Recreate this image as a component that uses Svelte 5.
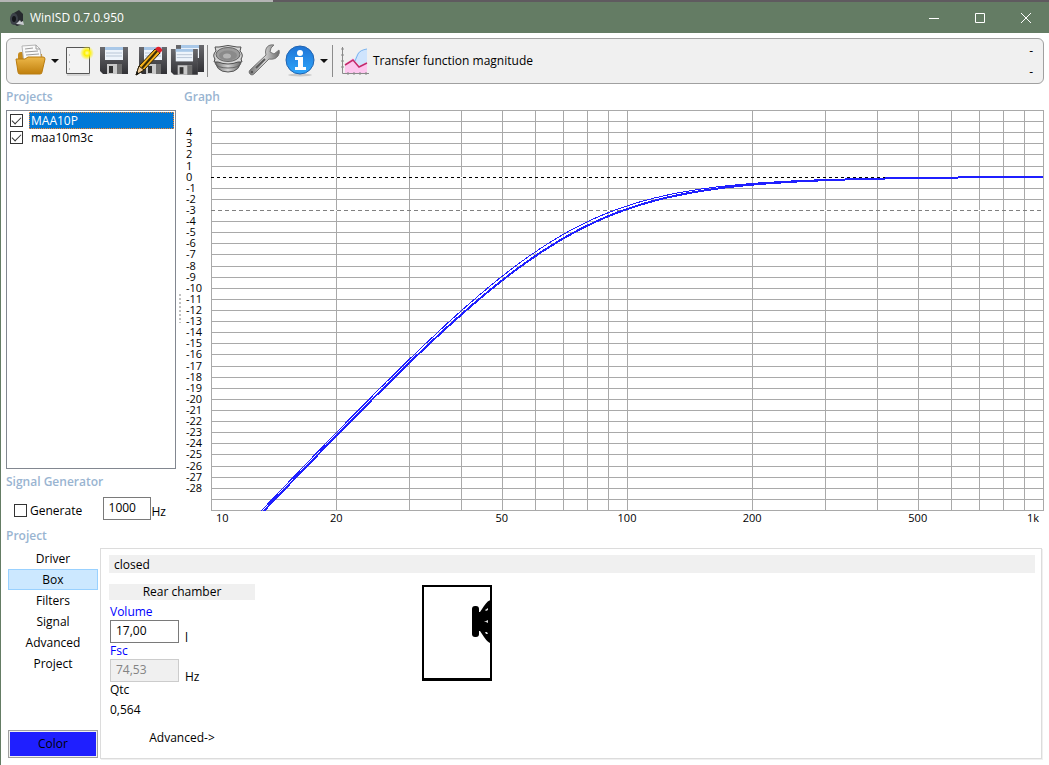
<script lang="ts">
  let projects = $state([
    { name: 'MAA10P', shown: true },
    { name: 'maa10m3c', shown: true },
  ]);
  let selected = $state(0);

  const tabs = ['Driver', 'Box', 'Filters', 'Signal', 'Advanced', 'Project'];
  let activeTab = $state('Box');

  let generate = $state(false);
  let signalHz = $state('1000');
  let volume = $state('17,00');
  let fsc = $state('74,53');

  // plot size follows the pane
  let graphW = $state(860);
  let graphH = $state(420);

  const LEFT = 27;
  const TOP = 4;
  const DB_MAX = 6;
  const DB_MIN = -30;

  let plotW = $derived(graphW - LEFT - 1);
  let plotH = $derived(graphH - TOP - 16);

  const freqX = (f: number) => LEFT + (Math.log10(f / 10) / 2) * plotW;
  const dbY = (db: number) => TOP + ((DB_MAX - db) / (DB_MAX - DB_MIN)) * plotH;
  const snap = (v: number) => Math.round(v) + 0.5;

  const freqs = [10, 20, 30, 40, 50, 60, 70, 80, 90, 100, 200, 300, 400, 500, 600, 700, 800, 900, 1000];
  const dbs = Array.from({ length: DB_MAX - DB_MIN + 1 }, (_, i) => DB_MAX - i);
  const labelDbs = dbs.filter((d) => d <= 4 && d >= -28);
  const freqLabels = [
    { f: 10, text: '10', anchor: 'start', dx: 5 },
    { f: 20, text: '20', anchor: 'middle', dx: 0 },
    { f: 50, text: '50', anchor: 'middle', dx: 0 },
    { f: 100, text: '100', anchor: 'middle', dx: 0 },
    { f: 200, text: '200', anchor: 'middle', dx: 0 },
    { f: 500, text: '500', anchor: 'middle', dx: 0 },
    { f: 1000, text: '1k', anchor: 'end', dx: -4 },
  ];

  // closed box: second order high-pass
  function response(f: number, fc: number, q: number) {
    const x = f / fc;
    const den = Math.sqrt((1 - x * x) ** 2 + (x / q) ** 2);
    return 20 * Math.log10((x * x) / den);
  }

  function curve(fc: number, q: number) {
    const pts: string[] = [];
    for (let i = 0; i <= 400; i++) {
      const f = 10 * 10 ** (i / 200);
      const db = response(f, fc, q);
      if (db < DB_MIN - 0.4) continue;
      pts.push(`${freqX(f).toFixed(1)},${dbY(db).toFixed(1)}`);
    }
    return pts.join(' ');
  }

  let thick = $derived(curve(75, 0.564));
  let thin = $derived(curve(74, 0.58));
</script>

{#snippet floppy()}
  <path d="M1 2h28v27H4l-3-3z" fill="url(#metal)" />
  <path d="M6 2h18v13H6z" fill="#eef4fb" />
  <path d="M6 2h18v3H6z" fill="#a9c8e8" />
  <path d="M7 8h16M7 11h16" stroke="#b9c6d6" />
  <path d="M8 19h15v10H8z" fill="#c9c9c9" />
  <path d="M10 21h4v7h-4z" fill="#333" />
  <path d="M18 19h5v10h-5z" fill="#6e6e6e" />
{/snippet}

<div class="window">
  <div class="desktop"></div>
  <header class="titlebar">
    <svg class="app-icon" viewBox="0 0 16 18" aria-hidden="true">
      <path d="M3 5 10 1l4 4v10l-6 2-5-3z" fill="#26292e" />
      <ellipse cx="5" cy="10" rx="4" ry="6" fill="#3c4149" />
      <ellipse cx="5" cy="10" rx="2" ry="3" fill="#14161a" />
      <path d="m7 15 4-4 1 2 2-1 1 4z" fill="#c9ccd0" />
    </svg>
    <h1>WinISD 0.7.0.950</h1>
    <div class="win-buttons">
      <button aria-label="Minimize"><svg viewBox="0 0 10 10"><path d="M0 5.5h10" /></svg></button>
      <button aria-label="Maximize"><svg viewBox="0 0 10 10"><path d="M.5.5h9v9h-9z" /></svg></button>
      <button aria-label="Close"><svg viewBox="0 0 10 10"><path d="m0 0 10 10M10 0 0 10" /></svg></button>
    </div>
  </header>

  <div class="toolbar">
    <svg class="defs" aria-hidden="true">
      <defs>
        <linearGradient id="metal" x2="0" y2="1">
          <stop offset="0" stop-color="#6a6a6e" /><stop offset="1" stop-color="#313135" />
        </linearGradient>
        <linearGradient id="folder" x2="0" y2="1">
          <stop offset="0" stop-color="#edb84a" /><stop offset="1" stop-color="#c07f0c" />
        </linearGradient>
        <linearGradient id="info" x2="0" y2="1">
          <stop offset="0" stop-color="#1f74d6" /><stop offset="1" stop-color="#2fa6fa" />
        </linearGradient>
        <linearGradient id="steel">
          <stop offset="0" stop-color="#707070" /><stop offset=".5" stop-color="#d4d4d4" /><stop offset="1" stop-color="#686868" />
        </linearGradient>
        <radialGradient id="glow">
          <stop offset="0" stop-color="#fffcb0" /><stop offset=".4" stop-color="#fff200" /><stop offset="1" stop-color="#fff200" stop-opacity="0" />
        </radialGradient>
      </defs>
    </svg>

    <button class="tool" aria-label="Open project">
      <svg viewBox="0 0 32 32">
        <path d="M3 10q0-3 3-3h5l2 2h14l1 15H3z" fill="#c68a1c" />
        <path d="m7 1 14-1 4 4 2 14-18 1z" fill="#fafafa" stroke="#b5b5b5" />
        <path d="M21 0v4h4M10 4l8-1M10 7l13-1M11 10l13-1" stroke="#9b9b9b" fill="none" />
        <path d="M1 14h9l3-2h15q2 0 2 2l-3 13q0 2-2 2H5q-2 0-2-2z" fill="url(#folder)" stroke="#b97c10" />
      </svg>
    </button>
    <button class="arrow" aria-label="Recent projects"></button>
    <button class="tool" aria-label="New project">
      <svg viewBox="0 0 32 32">
        <path d="M3.500 2.500h23v26h-23z" fill="#f3f3f3" stroke="#555" />
        <path d="M6 10h1M6 17h1M6 24h1" stroke="#888" />
        <path d="M4 30h23" stroke="#bbb" />
        <circle cx="24" cy="8" r="7" fill="url(#glow)" />
      </svg>
    </button>
    <button class="tool" aria-label="Save">
      <svg viewBox="0 0 32 32">{@render floppy()}</svg>
    </button>
    <button class="tool" aria-label="Save as">
      <svg viewBox="0 0 32 32">
        <g transform="translate(3 0)">{@render floppy()}</g>
        <path d="M1 30 4 21 20 4l5 4L9 25z" fill="#f6b21b" stroke="#2b2108" />
        <path d="M7 23 22 6" stroke="#3c2c04" stroke-width="2" />
        <path d="m20 4 2-2q2-1 4 1t1 3l-2 2z" fill="#e0202a" />
        <path d="m1 30 3-9 5 4z" fill="#edc998" stroke="#2b2108" />
        <path d="m1 30 1-4 2 3z" fill="#111" />
      </svg>
    </button>
    <button class="tool" aria-label="Save all">
      <svg viewBox="0 0 32 32">
        <g transform="translate(4 -2)">{@render floppy()}</g>
        <g transform="translate(-1 2) scale(.96)">{@render floppy()}</g>
      </svg>
    </button>
    <span class="sep"></span>
    <button class="tool" aria-label="Drivers">
      <svg viewBox="0 0 32 32">
        <path d="M3 13q0 14 13 14t13-14z" fill="url(#steel)" stroke="#555" />
        <path d="M3 18q2 5 13 5t13-5" stroke="#666" fill="none" />
        <path d="M3 2h4q9-3 18 0h4l-1 4q4 4 1 8l1 3h-4q-10 4-20 0H2l1-3q-3-4 1-8z" fill="#d6d6d6" stroke="#4f4f4f" />
        <ellipse cx="16" cy="9.500" rx="12" ry="7" fill="#9c9c9c" stroke="#666" />
        <ellipse cx="16" cy="10.500" rx="9" ry="5" fill="#8a8a8a" />
        <ellipse cx="15" cy="11" rx="4" ry="2.500" fill="#b4b4b4" />
      </svg>
    </button>
    <button class="tool" aria-label="Options">
      <svg viewBox="0 0 32 32">
        <path d="M26 0q-6-1-8 4-1 3 0 6L2 25q-2 2 0 4t4 0L21 14q6 1 9-3 2-3 1-6l-5 4-4-2 1-4z" fill="url(#steel)" stroke="#777" />
        <path d="m8 23 9-9" stroke="#5a5a5a" stroke-width="2" />
        <circle cx="4" cy="27" r="1" fill="#444" />
      </svg>
    </button>
    <button class="tool" aria-label="About">
      <svg viewBox="0 0 32 32">
        <ellipse cx="16" cy="30" rx="12" ry="1.500" fill="#c9c9c9" />
        <circle cx="16" cy="15" r="14" fill="url(#info)" stroke="#2063b0" />
        <circle cx="16" cy="8" r="3" fill="#fff" />
        <path d="M11 12h8v10h3v3H11v-3h3v-7h-3z" fill="#fff" />
      </svg>
    </button>
    <button class="arrow" aria-label="Help menu"></button>
    <span class="sep"></span>
    <button class="graph-type">
      <svg viewBox="0 0 28 28" aria-hidden="true">
        <path d="m4 17 8-6 6 8 8-4v11H4z" fill="#fdc6ee" />
        <path d="m13 13 3-6q2-4 10-5v13l-7 4z" fill="#cfe4fd" />
        <path d="m14 14 3-7q2-4 9-5" stroke="#7cb4ee" fill="none" />
        <path d="m4 18 8-5 6 7 8-4" stroke="#c42a6c" stroke-width="1.500" fill="none" />
        <path d="M1.500 0v26.500H28M0 2h3M0 8h3M0 14h3M0 20h3M7 25v3M13 25v3M19 25v3M25 25v3" stroke="#8a8a8a" fill="none" />
      </svg>
      Transfer function magnitude
    </button>
    <div class="readout"><span>-</span><span>-</span></div>
  </div>

  <div class="upper">
    <aside class="side">
      <h2>Projects</h2>
      <ul class="project-list">
        {#each projects as p, i}
          <li>
            <input type="checkbox" bind:checked={p.shown} aria-label={`Show ${p.name}`} />
            <button class:selected={i === selected} onclick={() => (selected = i)}>{p.name}</button>
          </li>
        {/each}
      </ul>
      <h2>Signal Generator</h2>
      <div class="generator">
        <label class="gen-check"><input type="checkbox" bind:checked={generate} />Generate</label>
        <label class="gen-freq"><input type="text" aria-label="Frequency" bind:value={signalHz} /><span>Hz</span></label>
      </div>
    </aside>

    <div class="splitter"></div>

    <section class="graph-pane">
      <h2>Graph</h2>
      <div class="graph" bind:clientWidth={graphW} bind:clientHeight={graphH}>
        <svg width={graphW} height={graphH}>
          <clipPath id="plot"><rect x={LEFT} y={TOP} width={plotW + 1} height={plotH + 1} /></clipPath>
          {#each freqs as f}
            <path class="grid" d="M{snap(freqX(f))} {TOP}V{TOP + plotH + 1}" />
          {/each}
          {#each dbs as db}
            {#if db === 0 || db === -3}
              <path class="grid blank" d="M{LEFT + 1} {snap(dbY(db))}H{LEFT + plotW}" />
            {/if}
            <path class="grid" class:zero={db === 0} class:cutoff={db === -3} d="M{LEFT} {snap(dbY(db))}H{LEFT + plotW + 1}" />
          {/each}
          <g clip-path="url(#plot)">
            <polyline class="curve" points={thin} />
            <polyline class="curve main" points={thick} />
          </g>
          {#each labelDbs as db}
            <text x="2" y={Math.round(dbY(db)) + 4}>{db}</text>
          {/each}
          {#each freqLabels as l}
            <text x={freqX(l.f) + l.dx} y={TOP + plotH + 12} text-anchor={l.anchor}>{l.text}</text>
          {/each}
        </svg>
      </div>
    </section>
  </div>

  <h2 class="project-title">Project</h2>
  <div class="lower">
    <nav class="tabs">
      {#each tabs as tab}
        <button class:active={tab === activeTab} onclick={() => (activeTab = tab)}>{tab}</button>
      {/each}
      <button class="color">Color</button>
    </nav>
    <section class="box-panel">
      <div class="box-type">closed</div>
      <div class="box-body">
        <div class="chamber">
          <h3>Rear chamber</h3>
          <label class="blue" for="volume">Volume</label>
          <div class="field"><input id="volume" type="text" bind:value={volume} /><span>l</span></div>
          <label class="blue" for="fsc">Fsc</label>
          <div class="field"><input id="fsc" type="text" bind:value={fsc} disabled /><span>Hz</span></div>
          <span class="label">Qtc</span>
          <span class="qtc">0,564</span>
          <button class="advanced">Advanced-&gt;</button>
        </div>
        <svg class="box-drawing" viewBox="0 0 72 98" role="img" aria-label="Closed box">
          <path d="M2 2h68v94H2z" fill="#fff" stroke="#000" stroke-width="2" />
          <path d="M1 94h70v3H1zM1 1h70v2H1z" />
          <rect x="51" y="22" width="7" height="31" rx="3" />
          <path d="M58 28h1l4-6q4-6 7-6v43q-3 0-7-6l-4-6h-1z" />
          <path d="m64 26 3-2v2l-2 1zM63 37h2l2-1v3l-2-1zM64 48l2 0 1 2h-2z" fill="#ddd" />
        </svg>
      </div>
    </section>
  </div>
</div>

<style>
  :global(body) {
    margin: 0;
  }

  .window {
    display: flex;
    flex-direction: column;
    min-height: 100vh;
    box-sizing: border-box;
    border-left: 1px solid #647c64;
    background: #fff;
    color: #000;
    font-family: 'Open Sans', 'Noto Sans', sans-serif;
    font-size: 12px;
    line-height: 16px;
  }

  button {
    padding: 0;
    border: 0;
    background: none;
    font: inherit;
    color: inherit;
  }

  h1,
  h2,
  h3 {
    margin: 0;
    font: inherit;
  }

  h2 {
    padding-left: 5px;
    color: #99b4d1;
    font-weight: 600;
  }

  input {
    box-sizing: border-box;
    margin: 0;
    font: inherit;
  }

  input[type='text'] {
    padding: 0 5px 2px;
    border: 1px solid #7a7a7a;
    background: #fff;
    color: #000;
  }

  input[type='text']:disabled {
    border-color: #ccc;
    background: #f0f0f0;
    color: #838383;
  }

  input[type='checkbox'] {
    appearance: none;
    flex: none;
    display: grid;
    place-items: center;
    width: 13px;
    height: 13px;
    border: 1px solid #333;
    background: #fff;
  }

  input[type='checkbox']:checked::before {
    content: '';
    width: 8px;
    height: 4px;
    margin-bottom: 3px;
    border: solid #333;
    border-width: 0 0 1px 1px;
    transform: rotate(-45deg);
  }

  .desktop {
    height: 2px;
    margin-left: -1px;
    background: linear-gradient(90deg, #b5b5b5 26%, #5f5a5f 26%);
  }

  .titlebar {
    display: flex;
    align-items: center;
    height: 31px;
    padding-left: 8px;
    background: #647c64;
    color: #fff;
  }

  .app-icon {
    width: 16px;
    height: 18px;
    margin-right: 5px;
  }

  .win-buttons {
    display: flex;
    margin-left: auto;
  }

  .win-buttons button {
    display: grid;
    place-items: center;
    width: 46px;
    height: 31px;
  }

  .win-buttons svg {
    width: 10px;
    height: 10px;
    fill: none;
    stroke: #fff;
  }

  .toolbar {
    display: flex;
    align-items: center;
    height: 44px;
    margin: 5px 5px 0;
    padding: 0 8px;
    border: 1px solid #a0a0a0;
    border-radius: 6px;
    background: #f0f0f0;
  }

  .defs {
    position: absolute;
    width: 0;
    height: 0;
  }

  .tool {
    width: 36px;
    height: 32px;
  }

  .tool svg {
    display: block;
    width: 32px;
    height: 32px;
    overflow: visible;
  }

  .arrow {
    width: 12px;
    height: 32px;
  }

  .arrow::before {
    content: '';
    display: block;
    border: solid transparent;
    border-width: 4px 4px 0;
    border-top-color: #111;
    width: 0;
  }

  .sep {
    width: 1px;
    height: 32px;
    margin-right: 4px;
    background: #8c8c8c;
  }

  .graph-type {
    display: flex;
    align-items: center;
    gap: 4px;
    margin-left: 4px;
  }

  .graph-type svg {
    width: 28px;
    height: 28px;
    overflow: visible;
  }

  .readout {
    display: flex;
    flex-direction: column;
    gap: 5px;
    margin-left: auto;
    padding-right: 2px;
  }

  .upper {
    display: flex;
    margin-top: 5px;
  }

  .side {
    display: flex;
    flex-direction: column;
    width: 175px;
  }

  .project-list {
    flex: 1;
    margin: 5px 0 5px 5px;
    padding: 1px;
    border: 1px solid #828790;
    list-style: none;
  }

  .project-list li {
    display: flex;
    align-items: center;
    gap: 6px;
    padding-left: 2px;
  }

  .project-list button {
    flex: 1;
    padding: 0 1px;
    border: 1px solid transparent;
    line-height: 15px;
    text-align: left;
  }

  .project-list button.selected {
    border: 1px dotted #ff8728;
    background: #0078d7;
    color: #fff;
  }

  .generator {
    display: flex;
    justify-content: space-between;
    padding: 7px 10px 6px 13px;
  }

  .gen-check {
    display: flex;
    align-items: center;
    gap: 3px;
    padding-top: 4px;
  }

  .gen-freq {
    display: flex;
    align-items: flex-end;
    gap: 1px;
  }

  .gen-freq input {
    width: 48px;
    height: 23px;
  }

  .splitter {
    align-self: center;
    width: 5px;
    height: 30px;
    margin: 0 1px 0 2px;
    background: radial-gradient(circle, #c0c0c0 1px, transparent 1px) 0 0 / 4px 4px;
  }

  .graph-pane {
    flex: 1;
    display: flex;
    flex-direction: column;
    min-width: 0;
  }

  .graph-pane h2 {
    padding-left: 0;
  }

  .graph {
    height: 420px;
    margin: 1px 5px 0 0;
    overflow: hidden;
  }

  .graph svg {
    display: block;
  }

  .graph text {
    font-size: 11px;
  }

  .grid {
    stroke: #a9a9a9;
    shape-rendering: crispEdges;
  }

  .grid.blank {
    stroke: #fff;
  }

  .grid.zero {
    stroke: #000;
    stroke-dasharray: 3 3;
  }

  .grid.cutoff {
    stroke: #808080;
    stroke-dasharray: 4 3;
  }

  .curve {
    fill: none;
    stroke: #1f1fff;
    shape-rendering: crispEdges;
  }

  .curve.main {
    stroke-width: 2px;
  }

  .project-title {
    margin: 2px 0 4px;
  }

  .lower {
    flex: 1;
    display: flex;
    padding: 0 7px 6px;
  }

  .tabs {
    display: flex;
    flex-direction: column;
    width: 90px;
    margin: 0 2px 1px 0;
  }

  .tabs button {
    height: 21px;
    border: 1px solid transparent;
  }

  .tabs button.active {
    border-color: #99d1ff;
    background: #cce8ff;
  }

  .tabs .color {
    height: 28px;
    margin-top: auto;
    border: 1px solid #a0a0a0;
    box-shadow: inset 0 0 0 1px #f0f0f0;
    background: #1f1fff;
  }

  .box-panel {
    flex: 1;
    padding: 6px 6px 0 8px;
    border: 1px solid #dcdcdc;
    box-shadow: 1px 1px 0 #f0f0f0;
  }

  .box-type {
    padding: 2px 5px 0;
    background: #f0f0f0;
  }

  .box-body {
    display: flex;
    align-items: flex-start;
    padding-top: 11px;
  }

  .chamber {
    display: flex;
    flex-direction: column;
    width: 146px;
    margin-right: 166px;
  }

  .chamber h3 {
    margin-bottom: 4px;
    background: #f0f0f0;
    text-align: center;
  }

  .chamber label,
  .label,
  .qtc {
    padding-left: 1px;
  }

  .blue {
    color: #0000ff;
  }

  .field {
    display: flex;
    align-items: flex-end;
    gap: 6px;
    padding-left: 1px;
  }

  .field input {
    width: 69px;
    height: 23px;
  }

  .field span {
    margin-bottom: -3px;
  }

  .qtc {
    margin: 4px 0 12px;
  }

  .advanced {
    text-align: center;
  }

  .box-drawing {
    width: 72px;
    height: 98px;
  }
</style>
